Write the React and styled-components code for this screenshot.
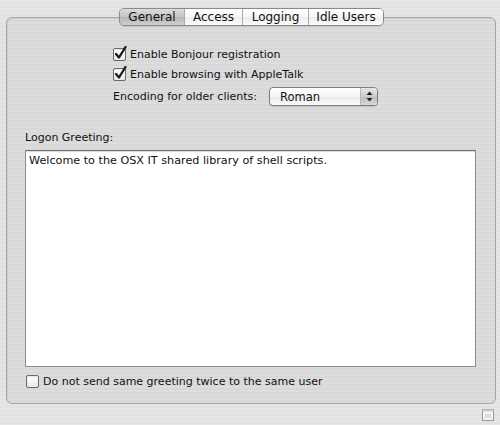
import React from "react";
import styled, { createGlobalStyle } from "styled-components";

const GlobalStyle = createGlobalStyle`
  html, body {
    margin: 0;
    padding: 0;
  }
  body {
    font-family: "DejaVu Sans", "Liberation Sans", sans-serif;
    color: #111;
  }
`;

const pinstripe = (base, line) =>
  `repeating-linear-gradient(to bottom, ${base} 0px, ${base} 2px, ${line} 2px, ${line} 4px)`;

const Window = styled.div`
  width: 500px;
  height: 425px;
  box-sizing: border-box;
  padding: 8px 4px 0 6px;
  background: ${pinstripe("#e6e6e6", "#e1e1e1")};
  display: flex;
  flex-direction: column;
  overflow: hidden;
`;

const TabBar = styled.div`
  display: flex;
  align-self: flex-start;
  margin-left: 113px;
  height: 18px;
  margin-bottom: -9px;
  position: relative;
  z-index: 1;
  border: 1px solid #8a8a8a;
  border-radius: 5px;
  overflow: hidden;
  box-sizing: border-box;
  box-shadow: 0 1px 1px rgba(0, 0, 0, 0.12);
`;

const Tab = styled.div`
  width: ${(p) => p.$w}px;
  display: flex;
  align-items: center;
  justify-content: center;
  font-size: 12px;
  border-left: ${(p) => (p.$first ? "none" : "1px solid #a9a9a9")};
  background: ${(p) =>
    p.$active
      ? "linear-gradient(to bottom, #dcdcdc 0%, #c4c4c4 50%, #b6b6b6 51%, #cfcfcf 100%)"
      : "linear-gradient(to bottom, #ffffff 0%, #f6f6f6 50%, #ececec 51%, #fafafa 100%)"};
`;

const GroupBox = styled.div`
  width: 490px;
  height: 387px;
  box-sizing: border-box;
  border: 1px solid #a5a5a5;
  border-radius: 6px;
  background: ${pinstripe("#dddddd", "#d8d8d8")};
  box-shadow: inset 1px 1px 0 rgba(0, 0, 0, 0.06);
  padding: 30px 0 0 18px;
  display: flex;
  flex-direction: column;
`;

const Options = styled.div`
  margin-left: 88px;
  display: flex;
  flex-direction: column;
  gap: 7px;
`;

const CheckRow = styled.label`
  display: flex;
  align-items: center;
  gap: 4px;
  font-size: 11px;
  height: 13px;
`;

const Box = styled.span`
  width: 11px;
  height: 11px;
  border: 1px solid #6a6a6a;
  border-radius: 2px;
  background: linear-gradient(to bottom, #ffffff, #e8e8e8);
  position: relative;
  flex: none;
  box-shadow: inset 0 1px 1px rgba(0, 0, 0, 0.1);
`;

const Mark = styled.svg`
  position: absolute;
  left: 0px;
  top: -3px;
  width: 13px;
  height: 14px;
`;

const Checkbox = ({ checked }) => (
  <Box>
    {checked && (
      <Mark viewBox="0 0 13 14">
        <path
          d="M2 8 L5 11.5 L11.5 1"
          fill="none"
          stroke="#1a1a1a"
          strokeWidth="2.3"
          strokeLinecap="round"
          strokeLinejoin="round"
        />
      </Mark>
    )}
  </Box>
);

const EncodingRow = styled.div`
  display: flex;
  align-items: center;
  gap: 12px;
  font-size: 11px;
  margin-top: -1px;
`;

const Popup = styled.div`
  width: 109px;
  height: 19px;
  box-sizing: border-box;
  border: 1px solid #7e7e7e;
  border-radius: 4px;
  display: flex;
  overflow: hidden;
  background: linear-gradient(to bottom, #ffffff 0%, #f4f4f4 50%, #e9e9e9 51%, #fbfbfb 100%);
  box-shadow: 0 1px 1px rgba(0, 0, 0, 0.12);
`;

const PopupLabel = styled.span`
  flex: 1;
  padding-left: 10px;
  display: flex;
  align-items: center;
  font-size: 11.5px;
`;

const PopupArrows = styled.span`
  width: 16px;
  border-left: 1px solid #b9b9b9;
  display: flex;
  align-items: center;
  justify-content: center;
  background: linear-gradient(to bottom, #e6e6e6 0%, #cdcdcd 50%, #bdbdbd 51%, #d8d8d8 100%);
`;

const SectionLabel = styled.div`
  font-size: 11px;
  margin-top: 25px;
  margin-bottom: 6px;
`;

const GreetingArea = styled.div`
  width: 451px;
  height: 217px;
  box-sizing: border-box;
  background: #fff;
  border: 1px solid #8c8c8c;
  border-top-color: #6f6f6f;
  box-shadow: inset 0 1px 1px rgba(0, 0, 0, 0.15);
  padding: 3px 3px;
  font-size: 11.2px;
`;

const BottomRow = styled(CheckRow)`
  margin-top: 8px;
  margin-left: 1px;
`;

const Footer = styled.div`
  display: flex;
  justify-content: flex-end;
  padding: 5px 2px 0 0;
`;

const Grip = styled.svg`
  width: 12px;
  height: 12px;
`;

export default function App() {
  return (
    <>
      <GlobalStyle />
      <Window>
        <TabBar>
          <Tab $w={64} $first $active>
            General
          </Tab>
          <Tab $w={57}>Access</Tab>
          <Tab $w={65}>Logging</Tab>
          <Tab $w={74}>Idle Users</Tab>
        </TabBar>
        <GroupBox>
          <Options>
            <CheckRow>
              <Checkbox checked />
              Enable Bonjour registration
            </CheckRow>
            <CheckRow>
              <Checkbox checked />
              Enable browsing with AppleTalk
            </CheckRow>
            <EncodingRow>
              Encoding for older clients:
              <Popup>
                <PopupLabel>Roman</PopupLabel>
                <PopupArrows>
                  <svg width="7" height="11" viewBox="0 0 7 11">
                    <path d="M3.5 0.5 L6.5 4 L0.5 4 Z" fill="#222" />
                    <path d="M3.5 10.5 L6.5 7 L0.5 7 Z" fill="#222" />
                  </svg>
                </PopupArrows>
              </Popup>
            </EncodingRow>
          </Options>
          <SectionLabel>Logon Greeting:</SectionLabel>
          <GreetingArea>Welcome to the OSX IT shared library of shell scripts.</GreetingArea>
          <BottomRow>
            <Checkbox />
            Do not send same greeting twice to the same user
          </BottomRow>
        </GroupBox>
        <Footer>
          <Grip viewBox="0 0 12 12">
            <rect x="0.5" y="0.5" width="11" height="11" fill="#f4f4f4" stroke="#9a9a9a" />
            <rect x="0.5" y="0.5" width="11" height="2" fill="#cfcfcf" />
            <path d="M3 6h6M3 8h6" stroke="#c4c4c4" strokeWidth="1" />
          </Grip>
        </Footer>
      </Window>
    </>
  );
}
